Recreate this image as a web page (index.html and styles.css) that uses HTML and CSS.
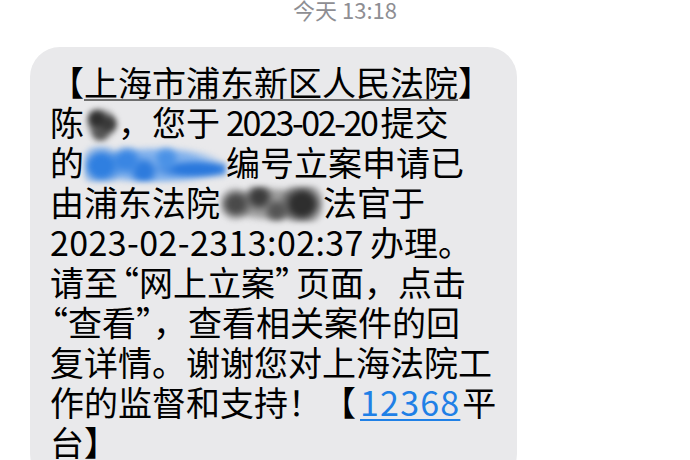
FILE: index.html
```html
<!DOCTYPE html>
<html lang="zh-CN">
<head>
  <meta charset="UTF-8">
  <meta name="viewport" content="width=device-width, initial-scale=1.0">
  <title>信息</title>
  <link rel="stylesheet" href="styles.css">
</head>
<body>
<div class="day">今天 13:18</div>
<div class="bubble">
  <p class="msg">【<span class="detect">上海市浦东新区人民法院</span>】<br>陈<span class="mask mask-name"></span>，您于<span class="num">2023-02-20</span>提交<br>的<span class="mask mask-blue"></span>编号立案申请已<br>由浦东法院<span class="mask mask-judge"></span>法官于<br><span class="num num-start">2023-02-2313:02:37</span>办理。<br>请至<span class="q-open">“</span>网上立案<span class="q-close">”</span>页面，点击<br><span class="q-lead">“</span>查看”<span class="comma">，</span>查看相关案件的回<br>复详情。谢谢您对上海法院工<br>作的监督和支持！【<a class="link" href="#">12368</a>平<br>台】</p>
</div>
</body>
</html>
```

FILE: styles.css
```css
body {
  margin: 0;
  background: #fff;
  font-family: "Noto Sans CJK SC", sans-serif;
  color: #000;
}

.day {
  text-align: center;
  font-size: 22px;
  line-height: 18px;
  color: #8e8e93;
  margin-bottom: 29px;
}

.bubble {
  width: 487px;
  margin-left: 30px;
  box-sizing: border-box;
  padding: 15px 21px 22px 20px;
  background: #e9e9eb;
  border-radius: 30px;
}

.msg {
  margin: 0;
  font-size: 34px;
  line-height: 40px;
  white-space: nowrap;
}

.num {
  margin: 0 4px 0 6px;
  letter-spacing: -2.4px;
}

.num-start {
  margin-left: 0;
  margin-right: 6px;
  letter-spacing: 0.4px;
}

.q-open {
  margin-left: -13px;
}

.q-close {
  letter-spacing: -13px;
}

.q-lead {
  margin-left: -16px;
}

.comma {
  margin-right: 1px;
}

.detect {
  text-decoration: underline;
  text-decoration-color: #6e6e6e;
  text-decoration-thickness: 2px;
  text-underline-offset: 3px;
}

.link {
  color: #1f80e6;
  text-decoration: underline;
  text-decoration-thickness: 2px;
  text-underline-offset: 3px;
  letter-spacing: 1.2px;
  margin-left: 4px;
  margin-right: 2px;
}

.mask {
  display: inline-block;
  vertical-align: -6px;
  height: 36px;
  filter: blur(2.5px);
}

.mask-name {
  width: 36px;
  margin-right: -2px;
  background:
    radial-gradient(circle at 35% 35%, #2e2e2e 0 16%, transparent 34%),
    radial-gradient(circle at 68% 50%, #3a3a3a 0 16%, transparent 34%),
    radial-gradient(circle at 45% 75%, #555 0 14%, transparent 32%),
    radial-gradient(ellipse at 50% 50%, #777 0 40%, transparent 66%);
}

.mask-blue {
  width: 142px;
  background:
    radial-gradient(circle at 12% 55%, #2f7fe0 0 8%, transparent 18%),
    radial-gradient(circle at 30% 40%, #3a86e3 0 7%, transparent 16%),
    radial-gradient(circle at 42% 70%, #2d7bdd 0 8%, transparent 18%),
    radial-gradient(circle at 58% 35%, #4b92e6 0 7%, transparent 16%),
    radial-gradient(ellipse at 80% 65%, #2a78dc 0 14%, transparent 30%),
    radial-gradient(ellipse at 50% 55%, #7fb0ec 0 48%, transparent 72%);
}

.mask-judge {
  width: 103px;
  background:
    radial-gradient(circle at 15% 50%, #4a4a4a 0 8%, transparent 20%),
    radial-gradient(circle at 38% 30%, #3c3c3c 0 9%, transparent 22%),
    radial-gradient(circle at 55% 70%, #555 0 9%, transparent 22%),
    radial-gradient(circle at 80% 50%, #2e2e2e 0 12%, transparent 28%),
    radial-gradient(ellipse at 50% 50%, #9a9a9a 0 44%, transparent 72%);
}
```
